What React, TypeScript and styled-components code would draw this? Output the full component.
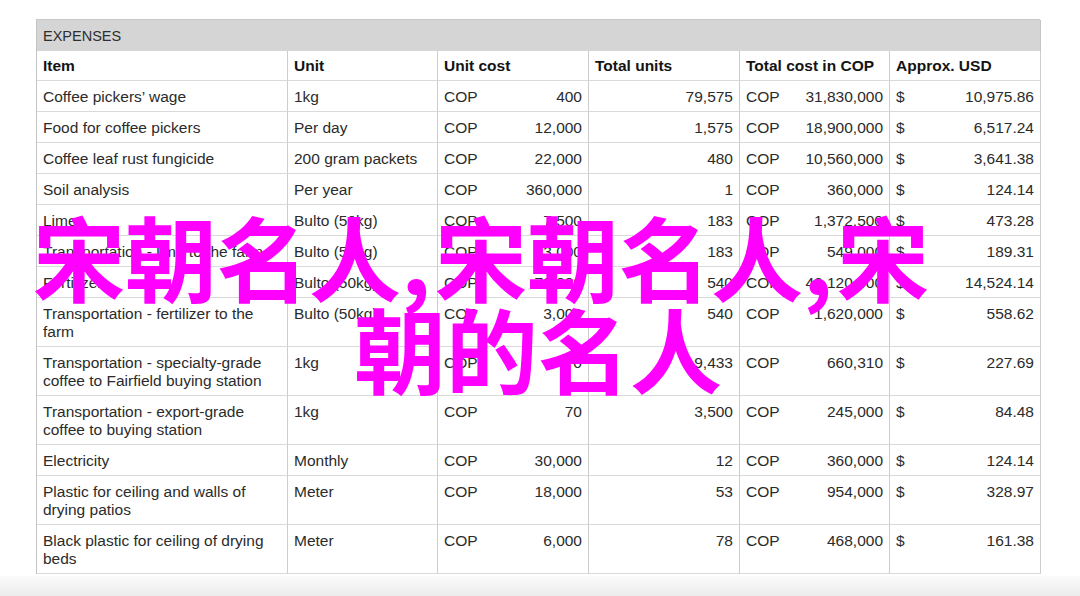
import React from "react";
import styled, { createGlobalStyle } from "styled-components";

const Global = createGlobalStyle`
  html, body { margin: 0; padding: 0; background: #ffffff; }
  body { font-family: "Liberation Sans", Arial, sans-serif; }
`;

const Page = styled.div`
  position: relative;
  width: 1080px;
  height: 596px;
  overflow: hidden;
  background: #ffffff;
  display: flex;
  flex-direction: column;
`;

const Stage = styled.div`
  flex: 1;
  padding: 19px 0 0 36px;
`;

const Table = styled.div`
  display: grid;
  grid-template-columns: 251px 150px 151px 151px 150px 151px;
  width: 1004px;
  border-top: 1px solid #c9c9c9;
  border-left: 1px solid #c4c4c4;
  box-sizing: border-box;
  font-size: 15.5px;
  color: #2b2b2b;
`;

const Caption = styled.div`
  grid-column: 1 / -1;
  height: 31px;
  box-sizing: border-box;
  background: #d5d5d5;
  border-right: 1px solid #c4c4c4;
  padding: 1px 6px 0;
  display: flex;
  align-items: center;
  font-size: 14.5px;
  color: #2e2e2e;
`;

const Cell = styled.div<{ $head?: boolean; $split?: boolean; $right?: boolean }>`
  box-sizing: border-box;
  padding: ${(p) => (p.$head ? "6px 6px 5px" : "7px 6px 5px")};
  line-height: 18px;
  border-right: 1px solid #cdcdcd;
  border-bottom: 1px solid #dadada;
  white-space: pre-line;
  font-weight: ${(p) => (p.$head ? 700 : 400)};
  color: ${(p) => (p.$head ? "#141414" : "#2b2b2b")};
  display: ${(p) => (p.$split ? "flex" : "block")};
  justify-content: space-between;
  align-items: flex-start;
  text-align: ${(p) => (p.$right ? "right" : "left")};
`;

const Footer = styled.div`
  height: 20px;
  background: linear-gradient(#fbfbfb, #ececec);
`;

const Overlay = styled.div`
  position: absolute;
  left: 0;
  top: 0;
  font-family: "Noto Sans CJK SC", "Noto Sans CJK JP", sans-serif;
  font-weight: 700;
  font-size: 92px;
  line-height: 92px;
  color: #ff00ff;
  white-space: nowrap;
  pointer-events: none;
`;

const OverlayLine = styled.div<{ $x: number; $y: number }>`
  position: absolute;
  left: ${(p) => p.$x}px;
  top: ${(p) => p.$y}px;
`;

const Comma = styled.span`
  display: inline-block;
  width: 34px;
`;

type Row = [string, string, string, string, string, string];

const rows: Row[] = [
  ["Coffee pickers’ wage", "1kg", "400", "79,575", "31,830,000", "10,975.86"],
  ["Food for coffee pickers", "Per day", "12,000", "1,575", "18,900,000", "6,517.24"],
  ["Coffee leaf rust fungicide", "200 gram packets", "22,000", "480", "10,560,000", "3,641.38"],
  ["Soil analysis", "Per year", "360,000", "1", "360,000", "124.14"],
  ["Lime", "Bulto (50kg)", "7,500", "183", "1,372,500", "473.28"],
  ["Transportation - lime to the farm", "Bulto (50kg)", "3,000", "183", "549,000", "189.31"],
  ["Fertilizer", "Bulto (50kg)", "78,000", "540", "42,120,000", "14,524.14"],
  ["Transportation - fertilizer to the\nfarm", "Bulto (50kg)", "3,000", "540", "1,620,000", "558.62"],
  ["Transportation - specialty-grade\ncoffee to Fairfield buying station", "1kg", "70", "9,433", "660,310", "227.69"],
  ["Transportation - export-grade\ncoffee to buying station", "1kg", "70", "3,500", "245,000", "84.48"],
  ["Electricity", "Monthly", "30,000", "12", "360,000", "124.14"],
  ["Plastic for ceiling and walls of\ndrying patios", "Meter", "18,000", "53", "954,000", "328.97"],
  ["Black plastic for ceiling of drying\nbeds", "Meter", "6,000", "78", "468,000", "161.38"],
];

const heads = ["Item", "Unit", "Unit cost", "Total units", "Total cost in COP", "Approx. USD"];

export default function App() {
  return (
    <>
      <Global />
      <Page>
        <Stage>
          <Table>
            <Caption>EXPENSES</Caption>
            {heads.map((h) => (
              <Cell key={h} $head>
                {h}
              </Cell>
            ))}
            {rows.map((r, i) => (
              <React.Fragment key={i}>
                <Cell>{r[0]}</Cell>
                <Cell>{r[1]}</Cell>
                <Cell $split>
                  <span>COP</span>
                  <span>{r[2]}</span>
                </Cell>
                <Cell $right>{r[3]}</Cell>
                <Cell $split>
                  <span>COP</span>
                  <span>{r[4]}</span>
                </Cell>
                <Cell $split>
                  <span>$</span>
                  <span>{r[5]}</span>
                </Cell>
              </React.Fragment>
            ))}
          </Table>
        </Stage>
        <Footer />
        <Overlay>
          <OverlayLine $x={33} $y={209}>
            宋朝名人<Comma>,</Comma>宋朝名人<Comma>,</Comma>宋
          </OverlayLine>
          <OverlayLine $x={354} $y={301}>
            朝的名人
          </OverlayLine>
        </Overlay>
      </Page>
    </>
  );
}
